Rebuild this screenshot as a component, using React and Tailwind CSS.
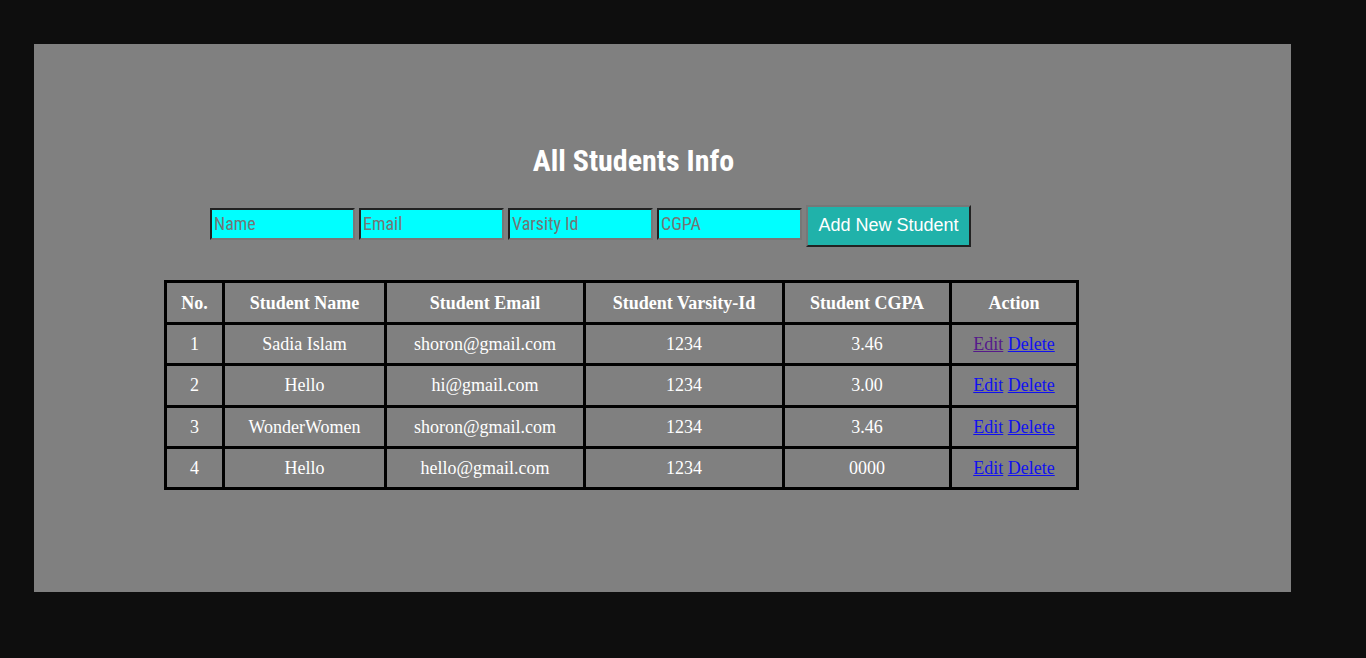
const fields = [
  { name: "name", label: "Name", type: "text" },
  { name: "email", label: "Email", type: "email" },
  { name: "varsityId", label: "Varsity Id", type: "text" },
  { name: "cgpa", label: "CGPA", type: "text" },
];

const columns = [
  { label: "No.", width: "w-[58px]" },
  { label: "Student Name", width: "w-[162px]" },
  { label: "Student Email", width: "w-[199px]" },
  { label: "Student Varsity-Id", width: "w-[199px]" },
  { label: "Student CGPA", width: "w-[167px]" },
  { label: "Action", width: "w-[127px]" },
];

const students = [
  { name: "Sadia Islam", email: "shoron@gmail.com", varsityId: "1234", cgpa: "3.46", visited: true },
  { name: "Hello", email: "hi@gmail.com", varsityId: "1234", cgpa: "3.00" },
  { name: "WonderWomen", email: "shoron@gmail.com", varsityId: "1234", cgpa: "3.46" },
  { name: "Hello", email: "hello@gmail.com", varsityId: "1234", cgpa: "0000" },
];

const cell = "border-3 border-black p-0";

function StudentForm() {
  return (
    <form className="mt-6 flex flex-wrap items-start gap-1 pl-[46px]" onSubmit={(e) => e.preventDefault()}>
      {fields.map((f) => (
        <input
          key={f.name}
          type={f.type}
          name={f.name}
          aria-label={f.label}
          placeholder={f.label}
          className="my-[3px] h-8 w-[145px] border-2 border-t-[#222] border-r-[#777] border-b-[#777] border-l-[#222] bg-[#00ffff] px-0.5 pb-0.5 font-['Agency_FB','Roboto_Condensed','Open_Sans_Condensed',Roboto,sans-serif] text-lg leading-6 text-black placeholder:text-[#757575]"
        />
      ))}
      <button
        type="submit"
        className="h-[42px] w-[165px] border-2 border-t-[#777] border-r-[#222] border-b-[#222] border-l-[#777] bg-[#20b2aa] pb-0.5 font-['Liberation_Sans',Arial,sans-serif] text-lg text-white"
      >
        Add New Student
      </button>
    </form>
  );
}

function StudentTable() {
  return (
    <table className="mt-[33px] h-[210px] w-full table-fixed border-collapse border-3 border-black text-center font-['Liberation_Serif',serif] text-lg leading-6 text-white">
      <thead>
        <tr className="h-[42px]">
          {columns.map((c) => (
            <th key={c.label} scope="col" className={`${cell} ${c.width} font-bold`}>
              {c.label}
            </th>
          ))}
        </tr>
      </thead>
      <tbody>
        {students.map((s, i) => (
          <tr key={i}>
            <td className={cell}>{i + 1}</td>
            <td className={cell}>{s.name}</td>
            <td className={cell}>{s.email}</td>
            <td className={cell}>{s.varsityId}</td>
            <td className={cell}>{s.cgpa}</td>
            <td className={cell}>
              <a href="#edit" className={`${s.visited ? "text-[#551a8b]" : "text-[#1010f0]"} underline`}>
                Edit
              </a>{" "}
              <a href="#delete" className="text-[#1010f0] underline">
                Delete
              </a>
            </td>
          </tr>
        ))}
      </tbody>
    </table>
  );
}

export default function App() {
  return (
    <div className="min-h-screen bg-[#0e0e0e] pt-11 pr-[75px] pb-16 pl-[34px]">
      <main className="bg-[#808080] pt-24 pb-[102px] pl-[130px]">
        <div className="max-w-[915px]">
          <h1 className="pl-6 text-center font-['Agency_FB','Roboto_Condensed','Open_Sans_Condensed',Roboto,sans-serif] text-[30px] leading-[41px] font-bold text-white">
            All Students Info
          </h1>
          <StudentForm />
          <StudentTable />
        </div>
      </main>
    </div>
  );
}
